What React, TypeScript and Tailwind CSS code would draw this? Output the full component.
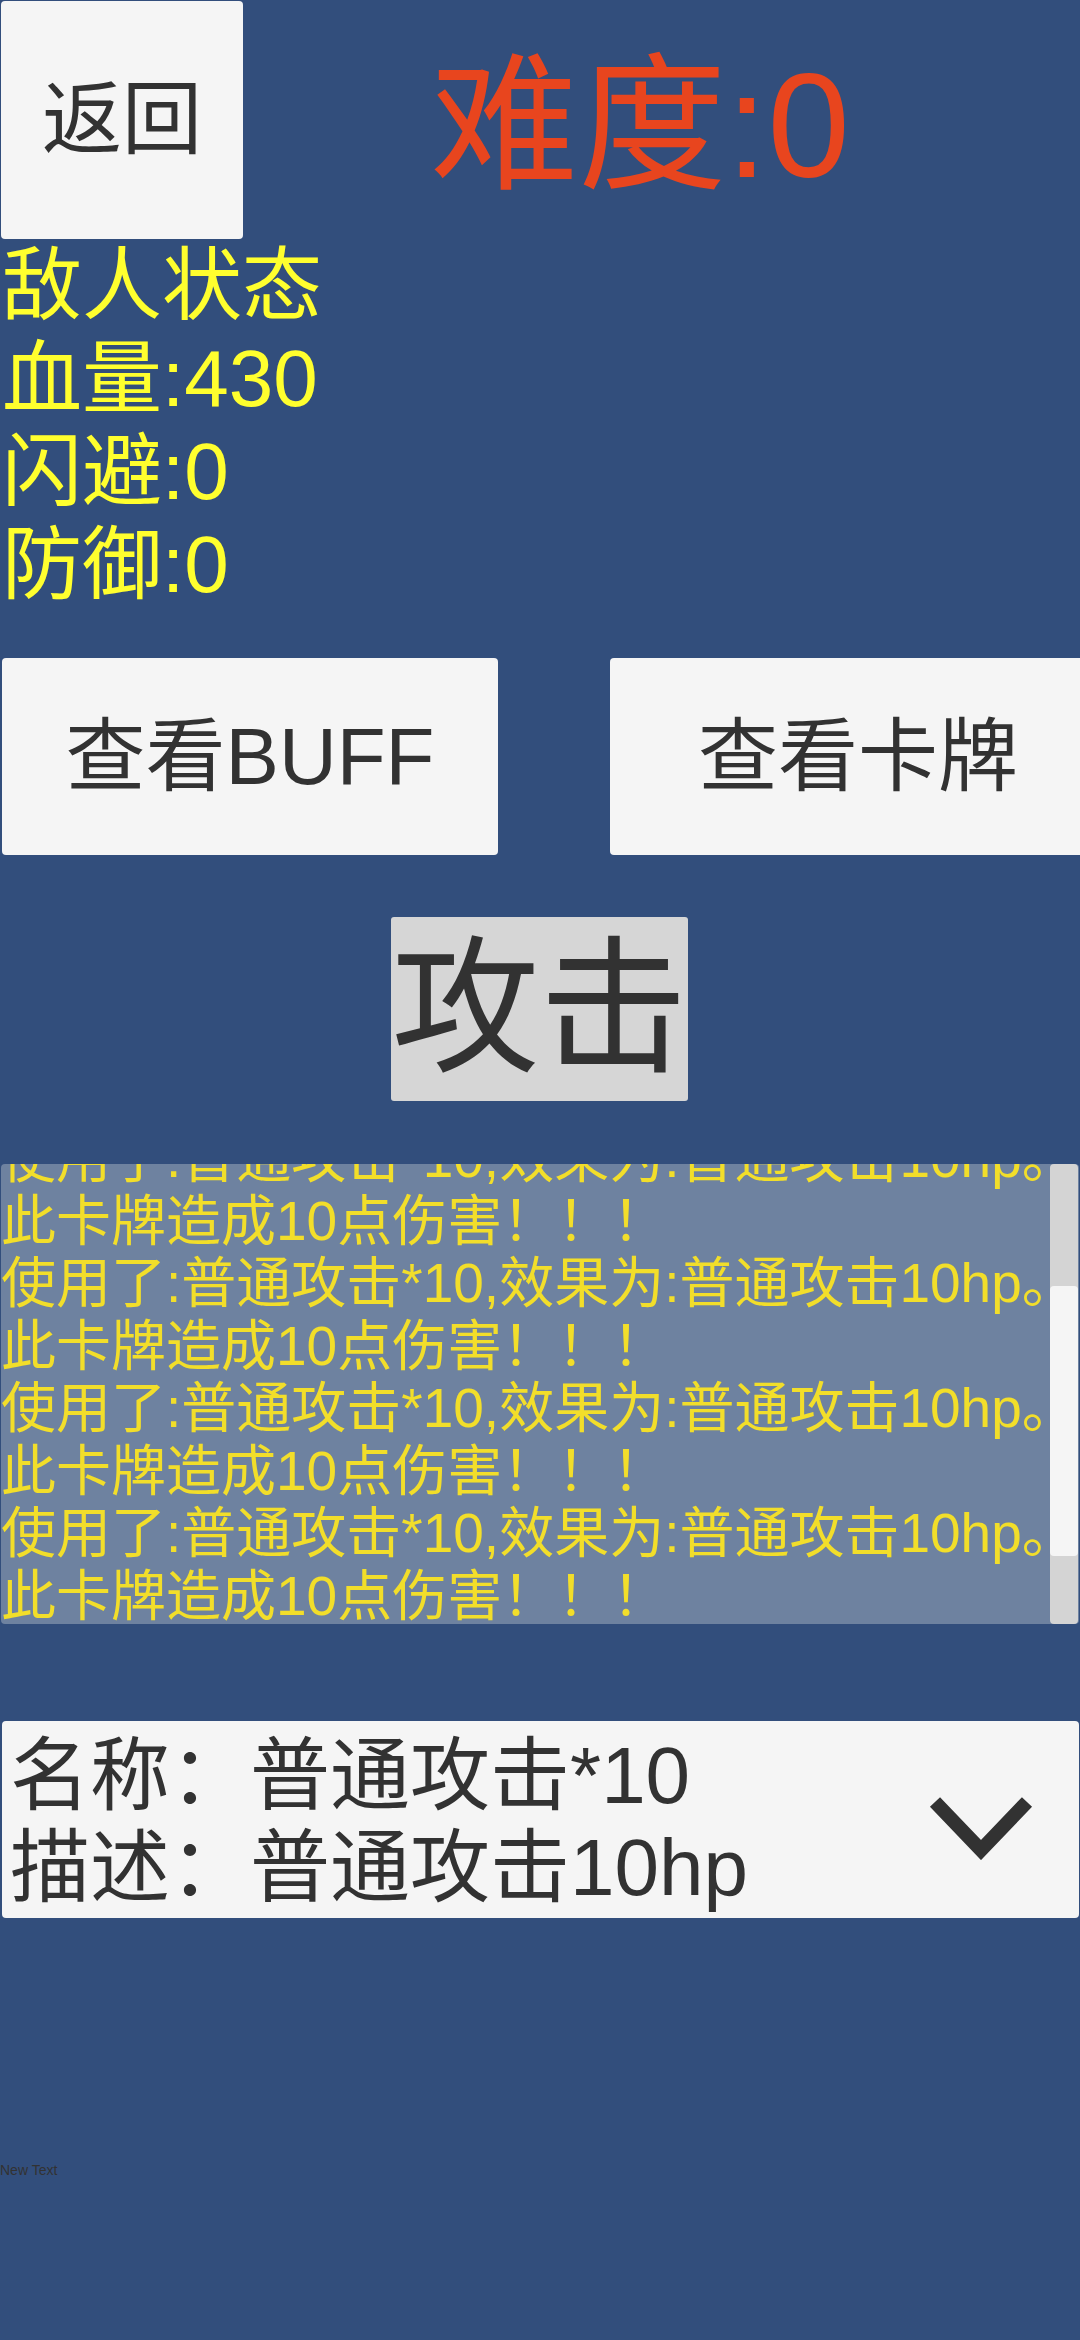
import React from 'react';

const font = "font-['Liberation_Sans','Noto_Sans_CJK_SC',sans-serif]";

const logLines = [
  '使用了:普通攻击*10,效果为:普通攻击10hp。',
  '此卡牌造成10点伤害！！！',
  '使用了:普通攻击*10,效果为:普通攻击10hp。',
  '此卡牌造成10点伤害！！！',
  '使用了:普通攻击*10,效果为:普通攻击10hp。',
  '此卡牌造成10点伤害！！！',
  '使用了:普通攻击*10,效果为:普通攻击10hp。',
  '此卡牌造成10点伤害！！！',
];

const stats = ['敌人状态', '血量:430', '闪避:0', '防御:0'];

export default function App() {
  return (
    <div className={`w-[1080px] h-[2340px] overflow-hidden bg-[#324e7c] flex flex-col ${font}`}>
      {/* header */}
      <div className="flex items-center">
        <button className="ml-[1px] mt-[1px] w-[242px] h-[238px] shrink-0 rounded-[4px] bg-[#f5f5f5] text-[#323232] text-[80px] leading-none">
          返回
        </button>
        <div className="w-[794px] pt-[12px] text-center text-[#e8451e] text-[148px] leading-none">难度:0</div>
      </div>

      {/* enemy status */}
      <div className="text-[#ffff2e] text-[80px] leading-[93px] pl-[2px]">
        {stats.map((s) => (
          <div key={s}>{s}</div>
        ))}
      </div>

      {/* actions */}
      <div className="mt-[47px] flex gap-[112px] pl-[2px]">
        <button className="w-[496px] h-[197px] shrink-0 rounded-[4px] bg-[#f5f5f5] text-[#323232] text-[80px] leading-none">
          查看BUFF
        </button>
        <button className="w-[496px] h-[197px] shrink-0 rounded-[4px] bg-[#f5f5f5] text-[#323232] text-[80px] leading-none">
          查看卡牌
        </button>
      </div>

      <button className="mt-[62px] ml-[391px] w-[297px] h-[184px] rounded-[3px] bg-[#d6d6d6] text-[#323232] text-[148px] leading-none flex items-center justify-center whitespace-nowrap">
        攻击
      </button>

      {/* battle log */}
      <div className="mt-[63px] ml-[1px] w-[1078px] h-[460px] rounded-[4px] bg-[#6e82a0] flex">
        <div className="w-[1048px] h-full overflow-hidden">
          <div className="-mt-[37px] text-[#f2de2a] text-[55px] leading-[62.5px] whitespace-nowrap">
            {logLines.map((l, i) => (
              <div key={i}>{l}</div>
            ))}
          </div>
        </div>
        <div className="ml-[1px] w-[28px] h-full rounded-[4px] bg-[#d4d4d4] flex flex-col">
          <div className="mt-[122px] h-[270px] rounded-[4px] bg-[#f5f5f5]" />
        </div>
      </div>

      {/* card dropdown */}
      <div className="mt-[97px] ml-[2px] w-[1077px] h-[197px] rounded-[4px] bg-[#f5f5f5] flex items-start justify-between">
        <div className="pl-[8px] pt-[9px] text-[#323232] text-[80px] leading-[92px] whitespace-nowrap">
          <div>名称：普通攻击*10</div>
          <div>描述：普通攻击10hp</div>
        </div>
        <svg className="mt-[73px] mr-[46px]" width="104" height="66" viewBox="0 0 104 66">
          <path d="M6 8 L52 56 L98 8" fill="none" stroke="#323232" strokeWidth="14" />
        </svg>
      </div>

      <div className="mt-[243px] text-[14px] leading-[18px] text-[#323232]">New Text</div>
    </div>
  );
}
